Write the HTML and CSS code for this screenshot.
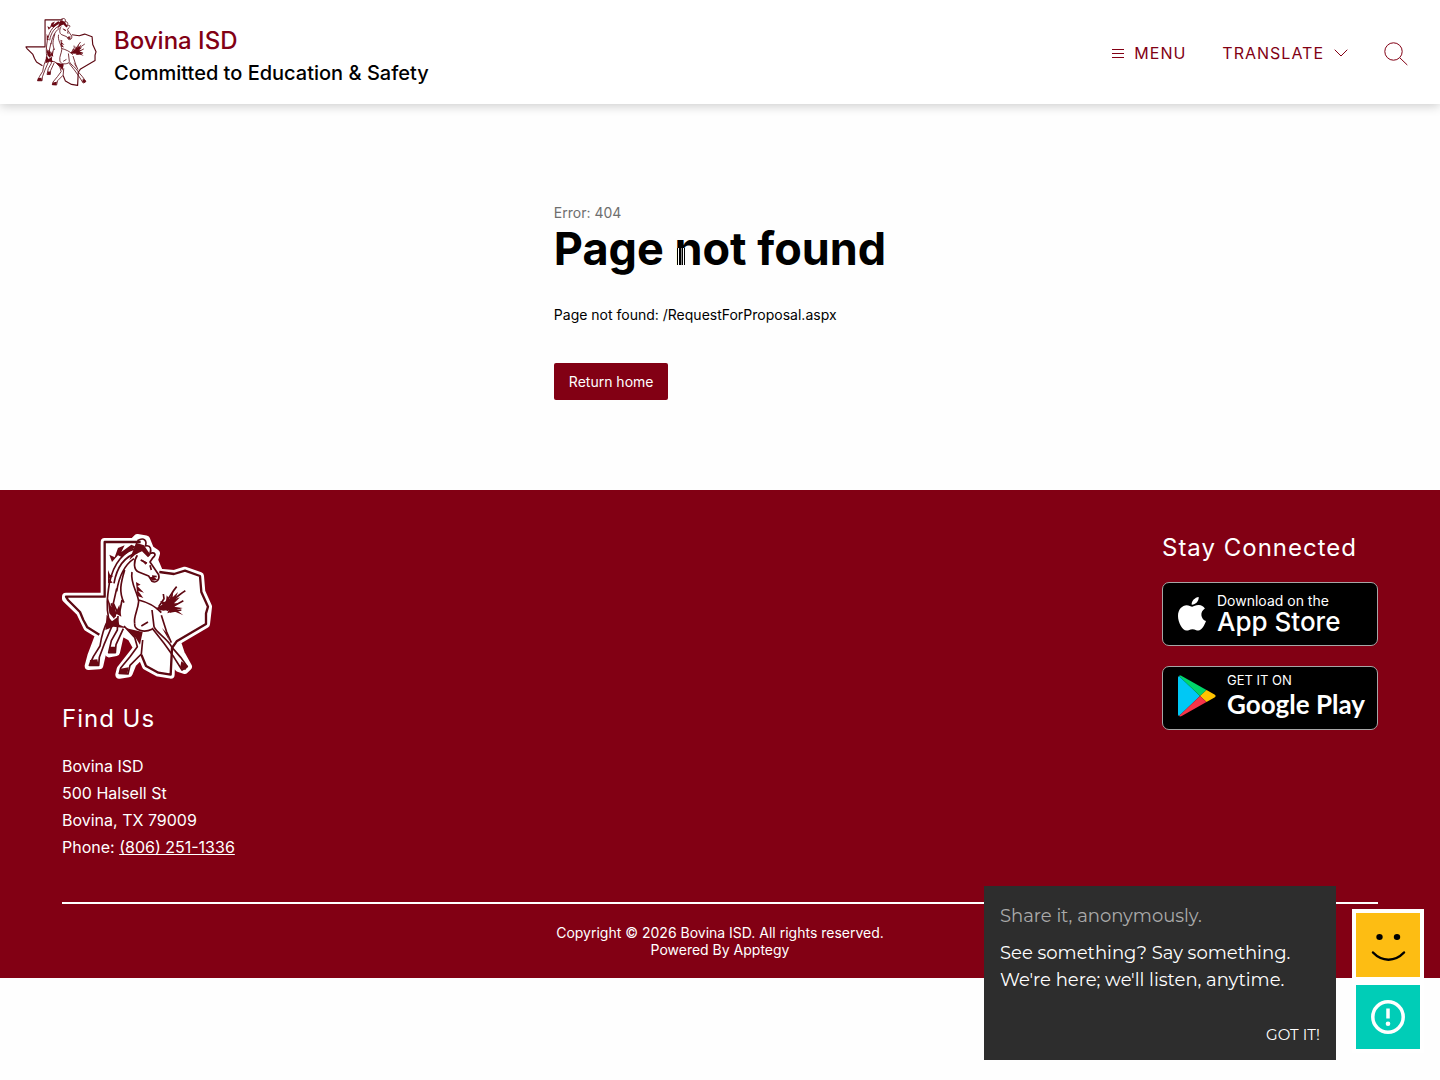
FILE: index.html
```html
<!DOCTYPE html>
<html lang="en">
<head>
<meta charset="utf-8">
<meta name="viewport" content="width=device-width, initial-scale=1">
<title>Page not found | Bovina ISD</title>
<link rel="stylesheet" href="styles.css">
</head>
<body>
<svg class="defs" aria-hidden="true">
  <symbol id="mustang" viewBox="36 36 450 450">
    <g class="logo-halo">
      <path d="M164 66H250L262 54L288 58L300 88L318 100L312 120L328 158L372 162L405 152L450 168L454 216L474 260L468 312L380 364L392 400L414 440L404 450L386 444L364 400L362 464L325 458L288 438L274 404L248 430L236 460L208 464L212 448L262 384L244 352L212 334L198 396L178 400L182 360L170 340L148 436L116 438L124 408L148 344L112 322L90 276L48 236V230H164Z"/>
    </g>
    <g class="logo-line">
      <path d="M272 66H164V230H48L54 240L90 276L100 300L112 322L148 344"/>
      <path d="M328 156L372 162L405 152L450 168L454 216L474 260L468 280V312L380 364L366 384L362 464L325 458L288 438L274 404"/>
      <path class="thin" d="M262 62C282 50 292 62 286 78C304 74 304 90 300 100C316 96 320 104 308 114L300 126L326 164C330 180 318 190 306 184L296 168L266 156C250 150 250 124 262 106M272 120L290 130M300 136L304 150M306 168L320 170M270 84C222 88 190 130 178 190C172 230 168 260 176 296M262 98C222 110 200 144 192 190M252 116C222 136 206 176 200 214M246 156C240 190 262 214 266 244C264 270 250 290 254 310M224 150C212 190 206 216 222 248M200 206L190 250L202 276M216 240L208 282M184 250L196 290"/>
      <path class="thin" d="M176 296C160 326 154 350 150 378L130 410L118 436L146 436L148 412L162 374L186 318M204 288L202 330L184 362L176 398L196 398L198 374L220 326M266 240C290 246 316 258 334 278M306 270L312 320C320 340 352 354 366 382L392 412L412 440L396 450L372 412L342 370L306 324M334 286L350 336L364 368M254 310C252 330 280 340 306 328M274 318L294 306M222 318L254 352L262 380L240 410L212 444L208 460L234 462L240 436L274 402L278 360"/>
      <path class="thin" d="M320 268C350 256 356 228 380 200M330 270C364 250 376 230 406 212M326 260L342 236L340 222M350 272C370 258 384 250 400 242M360 276L394 270"/>
    </g>
    <g class="logo-fill">
      <path d="M178 104L194 112L204 84L224 76L214 96L244 74L258 80L232 98L216 112L204 106L186 126Z"/>
      <path d="M258 68L282 76L294 94L302 104L294 112L276 94L258 102L238 120L250 90Z"/>
      <path d="M274 118L292 128L286 134ZM298 172L312 170L322 180L308 182Z"/>
      <path d="M316 266L338 254L330 244L348 246L350 226L358 236L370 212L368 232L384 216L376 236L390 232L372 250L388 250L372 260L398 264L380 270L400 286L372 274L352 280L356 270L340 272Z"/>
      <path d="M174 150L180 164L190 168L178 176L188 188L174 190ZM258 186L272 194L262 198L282 218L264 212L280 234L262 228Z"/>
      <path d="M170 284L186 304L202 292L208 314L236 326L278 336L270 374L256 352L226 324L190 320L166 330Z"/>
      <path d="M172 230L184 262L190 244L198 276L208 254L214 290L200 282L192 296L178 280Z"/>
      <path d="M120 420L142 418L146 436L118 438ZM180 380L196 380L196 398L178 398ZM212 446L236 442L232 462L206 462ZM394 424L414 438L406 450L390 444ZM336 324L350 338L358 362Z"/>
    </g>
  </symbol>
</svg>

<header class="site-header">
  <a class="brand" href="#">
    <svg class="brand-logo" role="img" aria-label="Bovina ISD logo"><use href="#mustang"/></svg>
    <span class="brand-text">
      <span class="brand-name">Bovina ISD</span>
      <span class="brand-tagline">Committed to Education &amp; Safety</span>
    </span>
  </a>
  <nav class="site-nav">
    <button class="nav-button" type="button">
      <svg class="icon-menu" viewBox="0 0 12 11" aria-hidden="true"><path d="M0 1.5h12M0 5.5h12M0 9.5h12"/></svg>
      Menu
    </button>
    <button class="nav-button translate" type="button">
      Translate
      <svg class="icon-chevron" viewBox="0 0 14 8" aria-hidden="true"><path d="M.7.7 7 7 13.3.7"/></svg>
    </button>
    <button class="nav-button search" type="button" aria-label="Search">
      <svg class="icon-search" viewBox="0 0 24 24" aria-hidden="true"><circle cx="9.5" cy="9.500" r="8.700"/><path d="m15.800 15.800 7.500 7.200"/></svg>
    </button>
  </nav>
</header>

<main class="error-page">
  <div class="error-content">
    <p class="error-code">Error: 404</p>
    <h1>Page <span class="pointer-host">not<svg class="text-pointer" viewBox="0 0 8 17" aria-hidden="true"><path class="beam" d="M0 0h8v17H0Z"/><path class="edge" d="M1.500 0v17M6.500 0v17"/><path class="shade" d="M4.500 0v17"/></svg></span> found</h1>
    <p class="error-message">Page not found: /RequestForProposal.aspx</p>
    <a class="home-link" href="#">Return home</a>
  </div>
</main>

<footer class="site-footer">
  <div class="footer-main">
    <section class="find-us">
      <svg class="footer-logo" role="img" aria-label="Bovina ISD logo"><use href="#mustang"/></svg>
      <h2>Find Us</h2>
      <address>
        Bovina ISD<br>
        500 Halsell St<br>
        Bovina, TX 79009<br>
        Phone: <a href="tel:8062511336">(806) 251-1336</a>
      </address>
    </section>
    <section class="connect">
      <h2>Stay Connected</h2>
      <a class="store" href="#">
        <svg class="apple" viewBox="0 0 28 35" aria-hidden="true"><path d="M20.700 0c.3 4.200-3.300 7.900-7 7.700C13.300 4 17 .4 20.700 0ZM14.200 9.700c1.500 0 3.600-1.700 6.700-1.600 2.400.1 4.600 1.200 6 3.300-5.300 3.300-4.400 10.400 1.100 12.700-1.300 3.800-4.300 9.400-7.600 9.500-2.300 0-3-1.400-5.900-1.400s-3.700 1.300-5.900 1.400C4.600 33.700 0 25.500 0 18.900 0 12.100 4.400 8.300 8.600 8.200c2.500 0 4.300 1.500 5.600 1.500Z"/></svg>
        <span class="store-text"><span class="apple-small">Download on the</span><span class="apple-large">App Store</span></span>
      </a>
      <a class="store google" href="#">
        <svg class="play" viewBox="0 0 38 42" aria-hidden="true"><path fill="#00c8f5" d="M1 1C.4 1.500 0 2 0 3v36c0 1 .4 1.700 1 2l21-20Z"/><path fill="#00d66b" d="M1 1c.7-.6 1.700-.5 2.700 0l24.800 14L22 21Z"/><path fill="#ffc400" d="m28.500 15 8 4.500c1.500.9 1.500 2.200 0 3l-8 4.500L22 21Z"/><path fill="#f63448" d="m22 21 6.500 6L3.700 41c-1 .6-2 .6-2.700 0Z"/></svg>
        <span class="store-text"><span class="play-small">GET IT ON</span><span class="play-large">Google Play</span></span>
      </a>
    </section>
  </div>
  <div class="copyright">
    <p>Copyright © 2026 Bovina ISD. All rights reserved.</p>
    <p>Powered By <a href="#">Apptegy</a></p>
  </div>
</footer>

<aside class="feedback">
  <div class="prompt">
    <p class="prompt-title">Share it, anonymously.</p>
    <p>See something? Say something. We're here; we'll listen, anytime.</p>
    <button class="dismiss" type="button">GOT IT!</button>
  </div>
  <div class="feedback-actions">
    <button class="tile smile" type="button" aria-label="Share feedback">
      <svg viewBox="0 0 64 64" aria-hidden="true"><ellipse cx="23.500" cy="24" rx="3.200" ry="3"/><ellipse cx="41" cy="24" rx="3.200" ry="3"/><path d="M17 39.500c9 9.500 22 9.500 31 0"/></svg>
    </button>
    <button class="tile alert" type="button" aria-label="Report a concern">
      <svg viewBox="0 0 64 64" aria-hidden="true"><circle cx="32" cy="32" r="15.200"/><path d="M32 23.500v10"/><circle class="dot" cx="32" cy="38.800" r="2.300"/></svg>
    </button>
  </div>
</aside>
</body>
</html>
```
FILE: styles.css
```css
:root {
  --maroon: #820014;
}

* {
  box-sizing: border-box;
}

body {
  margin: 0;
  background: #fefefe;
  color: #000;
  font-family: Inter, sans-serif;
  font-size: 16px;
}

h1, h2, p {
  margin: 0;
}

a {
  color: inherit;
  text-decoration: none;
}

button {
  padding: 0;
  border: 0;
  background: none;
  font: inherit;
  cursor: pointer;
}

.defs {
  display: block;
  width: 0;
  height: 0;
}

.logo-halo {
  fill: #fff;
  stroke: #fff;
  stroke-width: 24;
  stroke-linejoin: round;
}

.logo-line {
  fill: none;
  stroke: #5c0812;
  stroke-width: 7;
  stroke-linejoin: round;
}

.logo-line .thin {
  stroke-width: 5;
}

.logo-fill {
  fill: #6a0914;
}

.site-header {
  display: flex;
  align-items: center;
  justify-content: space-between;
  min-height: 104px;
  padding: 0 32px 0 24px;
  background: #fff;
  box-shadow: 0 2px 10px rgba(0, 0, 0, 0.2);
}

.brand {
  display: flex;
  align-items: center;
  gap: 16px;
}

.brand-logo {
  width: 74px;
  height: 74px;
}

.brand-text {
  display: flex;
  flex-direction: column;
  padding-top: 10px;
  font-weight: 500;
}

.brand-name {
  color: var(--maroon);
  font-size: 24px;
  line-height: 32px;
}

.brand-tagline {
  font-size: 20px;
  line-height: 32px;
}

.site-nav {
  display: flex;
  align-items: center;
  gap: 36px;
  padding-top: 2px;
}

.nav-button {
  display: flex;
  align-items: center;
  gap: 10px;
  color: var(--maroon);
  letter-spacing: 1px;
  line-height: 24px;
  text-transform: uppercase;
}

.nav-button svg {
  fill: none;
  stroke: currentColor;
}

.search {
  padding-top: 2px;
}

.icon-menu {
  width: 12px;
  height: 11px;
}

.icon-chevron {
  width: 14px;
  height: 8px;
}

.icon-search {
  width: 24px;
  height: 24px;
}

.error-page {
  display: flex;
  justify-content: center;
  padding: 100px 24px 90px;
}

.error-code {
  color: #6e6e6e;
  font-size: 14px;
  line-height: 18px;
}

.error-content h1 {
  font-size: 45px;
  font-weight: 700;
  line-height: 54px;
}

.pointer-host {
  position: relative;
}

.text-pointer {
  position: absolute;
  left: 3px;
  bottom: 11px;
  width: 8px;
  height: 17px;
  fill: none;
}

.text-pointer .edge {
  stroke: #fff;
}

.text-pointer .beam {
  fill: #000;
}

.text-pointer .shade {
  stroke: #888;
}

.error-message {
  margin: 30px 0 39px;
  font-size: 14px;
  line-height: 18px;
}

.home-link {
  display: inline-block;
  padding: 10px 15px;
  border-radius: 2px;
  background: var(--maroon);
  color: #fff;
  font-size: 14px;
  line-height: 17px;
}

.site-footer {
  padding: 42px 62px 20px;
  background: var(--maroon);
  color: #fff;
}

.footer-main {
  display: flex;
  justify-content: space-between;
  padding-bottom: 41px;
  border-bottom: 2px solid #fff;
}

.site-footer h2 {
  font-size: 24px;
  font-weight: 400;
  letter-spacing: 1px;
  line-height: 32px;
}

.footer-logo {
  display: block;
  width: 150px;
  height: 150px;
  margin-bottom: 21px;
}

address {
  margin-top: 18px;
  font-style: normal;
  line-height: 27px;
}

address a {
  text-decoration: underline;
}

.connect {
  display: flex;
  flex-direction: column;
  width: 216px;
}

.store {
  display: flex;
  align-items: center;
  gap: 11px;
  height: 64px;
  margin-bottom: 20px;
  padding-left: 15px;
  border: 1px solid #a6a6a6;
  border-radius: 7px;
  background: #000;
}

.store svg {
  flex-shrink: 0;
}

.connect h2 {
  margin-bottom: 18px;
}

.store-text {
  display: flex;
  flex-direction: column;
  white-space: nowrap;
}

.google {
  padding-bottom: 4px;
}

.apple {
  width: 28px;
  height: 35px;
  fill: #fff;
}

.play {
  width: 38px;
  height: 42px;
}

.apple-small {
  font-size: 14px;
  line-height: 15px;
}

.apple-large {
  font-size: 26px;
  font-weight: 500;
  line-height: 28px;
}

.play-small {
  font-size: 13px;
  line-height: 16px;
}

.play-large {
  font-family: Lato, sans-serif;
  font-size: 26px;
  font-weight: 700;
  line-height: 32px;
}

.copyright {
  padding-top: 20px;
  font-size: 14px;
  line-height: 17px;
  text-align: center;
}

.feedback {
  position: fixed;
  right: 16px;
  bottom: 20px;
  display: flex;
  align-items: flex-end;
  gap: 16px;
}

.prompt {
  display: flex;
  flex-direction: column;
  width: 352px;
  padding: 17px 16px 13px;
  background: #2d2d2d;
  color: #fff;
  font-family: Montserrat, "DejaVu Sans", sans-serif;
  font-size: 18px;
  line-height: 27px;
}

.prompt-title {
  margin-bottom: 10px;
  color: #aaa;
}

.dismiss {
  align-self: flex-end;
  margin-top: 29px;
  color: #fff;
  font-size: 15px;
  line-height: 24px;
}

.feedback-actions {
  display: flex;
  flex-direction: column;
  padding: 4px;
  margin-bottom: 7px;
  gap: 8px;
  background: #fff;
}

.tile {
  width: 64px;
  height: 64px;
}

.tile svg {
  display: block;
}

.smile {
  background: #fdbd13;
}

.smile path {
  fill: none;
  stroke: #000;
  stroke-width: 2.5;
  stroke-linecap: round;
}

.alert {
  background: #00cdb7;
}

.alert svg {
  fill: none;
  stroke: #fff;
  stroke-width: 3.5;
}

.alert .dot {
  fill: #fff;
  stroke: none;
}
```
